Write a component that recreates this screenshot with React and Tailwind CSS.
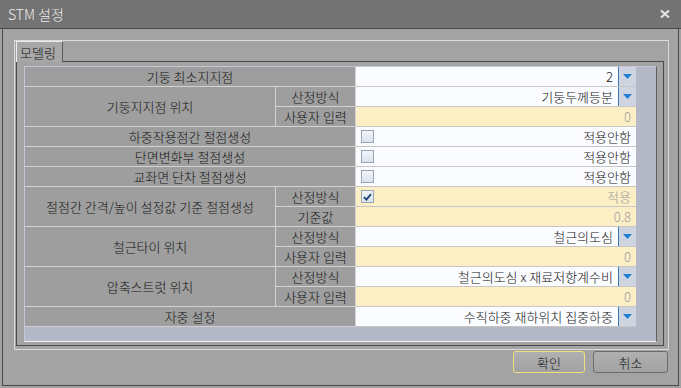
const groups = [
  { label: "기둥 최소지지점", rows: [{ value: "2", kind: "drop" }] },
  {
    label: "기둥지지점 위치",
    rows: [
      { sub: "산정방식", value: "기둥두께등분", kind: "drop" },
      { sub: "사용자 입력", value: "0", kind: "yellow" },
    ],
  },
  { label: "하중작용점간 절점생성", rows: [{ value: "적용안함", kind: "check" }] },
  { label: "단면변화부 절점생성", rows: [{ value: "적용안함", kind: "check" }] },
  { label: "교좌면 단차 절점생성", rows: [{ value: "적용안함", kind: "check" }] },
  {
    label: "절점간 간격/높이 설정값 기준 절점생성",
    rows: [
      { sub: "산정방식", value: "적용", kind: "check", checked: true, yellow: true },
      { sub: "기준값", value: "0.8", kind: "yellow" },
    ],
  },
  {
    label: "철근타이 위치",
    rows: [
      { sub: "산정방식", value: "철근의도심", kind: "drop" },
      { sub: "사용자 입력", value: "0", kind: "yellow" },
    ],
  },
  {
    label: "압축스트럿 위치",
    rows: [
      { sub: "산정방식", value: "철근의도심 x 재료저항계수비", kind: "drop" },
      { sub: "사용자 입력", value: "0", kind: "yellow" },
    ],
  },
  { label: "자중 설정", rows: [{ value: "수직하중 재하위치 집중하중", kind: "drop" }] },
];

function CheckBox({ checked }) {
  return (
    <div className="ml-[5px] w-[13px] h-[13px] border border-[#98a3b6] bg-gradient-to-b from-[#f2f5f9] to-[#d9e3ef] flex items-center justify-center">
      {checked && (
        <svg width="9" height="8" viewBox="0 0 9 8">
          <path d="M1 4.2 L3.4 6.6 L8 1.2" fill="none" stroke="#1d3f7c" strokeWidth="1.8" />
        </svg>
      )}
    </div>
  );
}

function ValueCell({ row }) {
  const yellow = row.kind === "yellow" || row.yellow;
  return (
    <div
      className={`w-[280px] h-[20px] border-b border-[#c6c6c6] flex items-center ${
        yellow ? "bg-[#fcefc6] text-[#9c9c9c]" : "bg-[#fbfcff] text-[#141414]"
      }`}
    >
      {row.kind === "check" && <CheckBox checked={row.checked} />}
      <span className="ml-auto mr-[5px] leading-none">{row.value}</span>
      {row.kind === "drop" && (
        <div className="w-[18px] h-full border-l border-[#3c74b2] bg-[#cfd5e0] flex items-center justify-center">
          <svg width="9" height="5" viewBox="0 0 9 5">
            <path d="M0 0 H9 L4.5 5 Z" fill="#1f7dd4" />
          </svg>
        </div>
      )}
    </div>
  );
}

function Group({ g }) {
  if (!g.rows[0].sub) {
    return (
      <div className="flex">
        <div className="w-[331px] h-[20px] bg-[#9e9e9e] border-r border-b border-[#d2d2d2] flex items-center justify-center">
          {g.label}
        </div>
        <ValueCell row={g.rows[0]} />
      </div>
    );
  }
  return (
    <div className="flex">
      <div
        className={`w-[251px] bg-[#9e9e9e] border-r border-b border-[#d2d2d2] flex items-center justify-center ${
          g.rows.length === 2 ? "h-[40px]" : "h-[20px]"
        }`}
      >
        {g.label}
      </div>
      <div className="flex flex-col">
        {g.rows.map((r, i) => (
          <div key={i} className="flex">
            <div className="w-[80px] h-[20px] bg-[#9e9e9e] border-r border-b border-[#d2d2d2] flex items-center justify-center">
              {r.sub}
            </div>
            <ValueCell row={r} />
          </div>
        ))}
      </div>
    </div>
  );
}

export default function App() {
  return (
    <div className="w-[681px] h-[388px] overflow-hidden bg-[#a2a2a2] flex flex-col font-['Noto_Sans_CJK_KR',sans-serif] font-light text-[13px] text-[#141414]">
      {/* title bar */}
      <div className="h-[29px] shrink-0 bg-[#737373] border-b border-[#4b4b4b] flex items-center justify-between pl-[8px] pr-[11px]">
        <span className="text-[14px] text-[#ececec] leading-none">STM 설정</span>
        <svg width="10" height="8" viewBox="0 0 10 8">
          <path d="M1 0.5 L9 7.5 M9 0.5 L1 7.5" stroke="#e2e2e2" strokeWidth="2.2" />
        </svg>
      </div>

      <div className="flex-1 mx-[2px] mb-[2px] border-x border-b border-[#4a4a4a] bg-[#a3a3a3] pl-[11px] pt-[11px]">
        {/* frame */}
        <div className="w-[655px] h-[310px] border border-[#dcdcdc] flex flex-col">
          <div className="ml-[1px] w-[47px] h-[21px] -mb-[1px] relative z-10 bg-[#a7a7a7] border-t border-l border-[#ececec] border-r border-r-[#5c5c5c] flex items-center pl-[3px] leading-none">
            모델링
          </div>
          <div className="ml-[1px] w-[648px] h-[285px] border border-[#4a4a4a] bg-[#a3a3a3] pl-[7px] pt-[4px]">
            {/* grid */}
            <div className="w-[633px] h-[276px] border-t border-l border-[#c3c7d6] border-r border-r-[#5e5e5e] border-b border-b-[#f4f4f4] bg-[#b4b8c7]">
              {groups.map((g, i) => (
                <Group key={i} g={g} />
              ))}
            </div>
          </div>
        </div>

        {/* buttons */}
        <div className="w-[655px] mt-[1px] flex justify-end gap-[8px] pr-[1px]">
          <button className="w-[72px] h-[22px] rounded-[3px] border border-[#f3e07c] bg-gradient-to-b from-[#b0b0b0] to-[#a2a2a2] text-[13px] text-[#141414] leading-none">
            확인
          </button>
          <button className="w-[75px] h-[22px] rounded-[3px] border border-[#6c6c6c] bg-gradient-to-b from-[#b0b0b0] to-[#a2a2a2] text-[13px] text-[#141414] leading-none">
            취소
          </button>
        </div>
      </div>
    </div>
  );
}
